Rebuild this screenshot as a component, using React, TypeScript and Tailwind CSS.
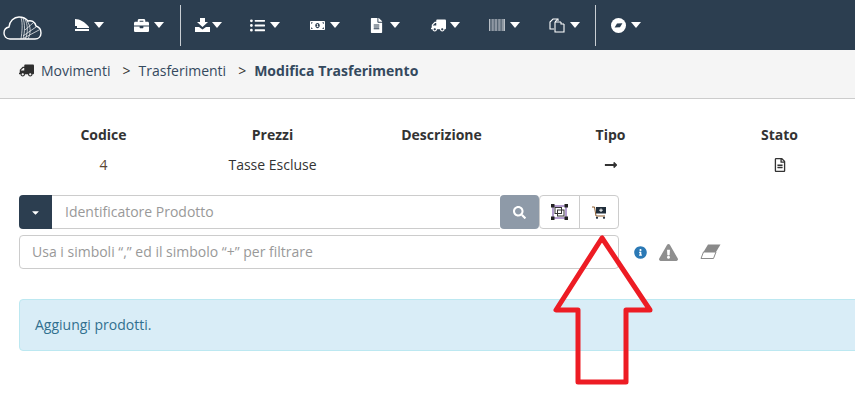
import type { ReactNode } from "react"
import {
  FaBriefcase,
  FaCaretDown,
  FaFileAlt,
  FaInfoCircle,
  FaListUl,
  FaLongArrowAltRight,
  FaMoneyBillAlt,
  FaRegFileAlt,
  FaSearch,
  FaExclamationTriangle,
  FaTruck,
} from "react-icons/fa"

const CloudLogo = () => (
  <svg width="39" height="24" viewBox="0 0 39 24" fill="none" stroke="#fff" strokeWidth="1.4">
    <path d="M7 23 C3 23 1 20 1 17 C1 13.5 3.5 11.5 6 11 C6.5 5 11 1 16 1 C20 1 23 2.5 25 5 C28 4 32 5.5 33 10 C36 11 38 14 38 17 C38 20.5 35.5 23 32 23 Z" />
    <path d="M18 1.5 C20 8 19 16 18 23 M20 2 C22 8 22 16 20 23 M22 3 C25 9 25 16 22.5 23 M24 5 C28 10 28 17 25 23 M20 20 L33 11 M21 22 L36 14 M22 14 L30 7" strokeWidth="0.7" />
  </svg>
)

const PieIcon = () => (
  <svg width="14" height="12" viewBox="0 0 14 12" fill="#fff">
    <path d="M0 0 C5 0 10 3 14 8 L14 9 L2 9 L2 7 L0 7 Z M0 10 L14 10 L14 12 L0 12 Z" />
  </svg>
)

const BoxDownIcon = () => (
  <svg width="15" height="14" viewBox="0 0 15 14" fill="#fff">
    <path d="M5 0 H10 V4 H13 L7.5 9 L2 4 H5 Z M0 9 H4 L7.5 11.5 L11 9 H15 V14 H0 Z" />
  </svg>
)

const BarcodeIcon = () => (
  <svg width="16" height="12" viewBox="0 0 16 12" fill="#b9bfc6">
    <path d="M0 0 H1 V12 H0 Z M1.6 0 H2.4 V12 H1.6 Z M3 0 H3.7 V12 H3 Z M4.4 0 H5.4 V12 H4.4 Z M6 0 H6.7 V12 H6 Z M7.3 0 H8 V12 H7.3 Z M8.7 0 H9.6 V12 H8.7 Z M10.2 0 H10.9 V12 H10.2 Z M11.5 0 H12.4 V12 H11.5 Z M13 0 H13.7 V12 H13 Z M14.3 0 H16 V12 H14.3 Z" />
  </svg>
)

const CopiesIcon = () => (
  <svg width="16" height="15" viewBox="0 0 16 15" fill="none" stroke="#fff" strokeWidth="1.1">
    <path d="M5 11 H1 V4 L4 1 H9 V3" />
    <path d="M6 4 H12 M6 4 L8.5 1 M6 4 V14 H15 V6" />
    <path d="M12 4 V6 H15" />
  </svg>
)

const CompassIcon = () => (
  <svg width="15" height="15" viewBox="0 0 15 15">
    <circle cx="7.5" cy="7.5" r="7.5" fill="#fff" />
    <path d="M3.6 9.6 L6 5.6 L11.4 5.2 L9 9.2 Z" fill="#2c3e50" />
  </svg>
)

const SelectIcon = () => (
  <svg width="17" height="16" viewBox="0 0 17 16" fill="none">
    <rect x="2" y="2" width="13" height="12" stroke="#6b3fa0" strokeWidth="1" />
    <rect x="4" y="3.5" width="6.5" height="6" stroke="#333" strokeWidth="1" />
    <rect x="6.5" y="6" width="6.5" height="6" stroke="#333" strokeWidth="1" />
    <rect x="0.5" y="0.5" width="2.5" height="2.5" fill="#222" stroke="#222" />
    <rect x="14" y="0.5" width="2.5" height="2.5" fill="#222" stroke="#222" />
    <rect x="0.5" y="13" width="2.5" height="2.5" fill="#222" stroke="#222" />
    <rect x="14" y="13" width="2.5" height="2.5" fill="#222" stroke="#222" />
  </svg>
)

const CartIcon = () => (
  <svg width="14" height="13" viewBox="0 0 14 13" fill="none">
    <path d="M0 1 H2.5 L4 10 H13" stroke="#8a5a2b" strokeWidth="1" />
    <rect x="4" y="1" width="10" height="6.5" fill="#1f2d3a" />
    <path d="M9 2.5 V6 M7.2 4.2 H10.8" stroke="#fff" strokeWidth="1" />
    <circle cx="5" cy="11.8" r="1.1" fill="#1f2d3a" />
    <circle cx="12" cy="11.8" r="1.1" fill="#1f2d3a" />
  </svg>
)

const EraserIcon = () => (
  <svg width="21" height="15" viewBox="0 0 21 15" fill="none">
    <path d="M8 0.5 H20.5 L16 8 H3.5 Z" fill="#8a8a8a" />
    <path d="M3.5 8 H16 L13.5 14.5 H1 Z" fill="#fff" stroke="#8a8a8a" strokeWidth="1" />
  </svg>
)

const NavCaret = () => (
  <svg width="10" height="6" viewBox="0 0 10 6" fill="#fff">
    <path d="M0 0 H10 L5 6 Z" />
  </svg>
)

function NavItem({ icon, width }: { icon: ReactNode; width: string }) {
  return (
    <div className={`flex items-center ${width}`}>
      <span className="flex flex-1 items-center text-[15px] text-white">{icon}</span>
      <NavCaret />
    </div>
  )
}

const Divider = () => <div className="h-[41px] w-px bg-[#c9ced3]" />

const columns = ["Codice", "Prezzi", "Descrizione", "Tipo", "Stato"]

export default function App() {
  return (
    <div className="relative h-[417px] w-[855px] overflow-hidden bg-white font-['Open_Sans',sans-serif] text-[14px] text-[#333]">
      <nav className="flex h-[50px] items-center bg-[#2c3e50]">
        <div className="ml-[3px] mt-[6px] w-[72px]">
          <CloudLogo />
        </div>
        <NavItem width="w-[29px] mr-[30px]" icon={<PieIcon />} />
        <NavItem width="w-[30px] mr-[16px]" icon={<FaBriefcase />} />
        <Divider />
        <div className="flex items-center pl-[14px]">
          <NavItem width="w-[27px] mr-[28px]" icon={<BoxDownIcon />} />
          <NavItem width="w-[30px] mr-[30px]" icon={<FaListUl />} />
          <NavItem width="w-[30px] mr-[29px]" icon={<FaMoneyBillAlt />} />
          <NavItem width="w-[31px] mr-[31px]" icon={<FaFileAlt />} />
          <NavItem width="w-[29px] mr-[29px]" icon={<FaTruck className="-scale-x-100" />} />
          <NavItem width="w-[31px] mr-[29px]" icon={<BarcodeIcon />} />
          <NavItem width="w-[31px] mr-[15px]" icon={<CopiesIcon />} />
        </div>
        <Divider />
        <div className="pl-[15px]">
          <NavItem width="w-[30px]" icon={<CompassIcon />} />
        </div>
      </nav>

      <div className="flex h-[49px] items-center border-b border-[#ccc] bg-[#f5f5f5] pb-[7px] pl-[19px]">
        <span className="flex items-center gap-[7px] text-[#34495e]">
          <FaTruck className="-scale-x-100 text-[15px] text-[#2f2f2f]" />
          Movimenti
        </span>
        <span className="ml-[12px] mr-[8px]">&gt;</span>
        <span className="text-[#34495e]">Trasferimenti</span>
        <span className="ml-[12px] mr-[8px]">&gt;</span>
        <span className="font-bold text-[#34495e]">Modifica Trasferimento</span>
      </div>

      <div className="w-[864px] pl-[19px] pt-[22px]">
        <div className="grid grid-cols-5 text-center">
          {columns.map((c) => (
            <div key={c} className="mb-[3px] h-[28px] font-bold leading-[28px]">
              {c}
            </div>
          ))}
          <div className="leading-[26px] text-[#5a4632]">4</div>
          <div className="leading-[26px]">Tasse Escluse</div>
          <div />
          <div className="flex items-center justify-center">
            <FaLongArrowAltRight className="text-[14px]" />
          </div>
          <div className="flex items-center justify-center">
            <FaRegFileAlt className="text-[14px]" />
          </div>
        </div>
      </div>

      <div className="ml-[19px] mt-[17px] flex h-[34px] w-[600px]">
        <div className="flex w-[33px] items-center justify-center rounded-l-[4px] bg-[#2c3e50]">
          <FaCaretDown className="text-[11px] text-white" />
        </div>
        <div className="flex flex-1 items-center border-y border-[#ccc] pb-[2px] pl-[13px] text-[#999]">
          Identificatore Prodotto
        </div>
        <div className="flex w-[39px] items-center justify-center rounded-[4px] bg-[#8e9aa8]">
          <FaSearch className="text-[13px] text-white" />
        </div>
        <div className="flex w-[41px] items-center justify-center rounded-l-[4px] border border-[#ccc]">
          <SelectIcon />
        </div>
        <div className="-ml-px flex w-[40px] items-center justify-center rounded-r-[4px] border border-[#ccc]">
          <CartIcon />
        </div>
      </div>

      <div className="ml-[19px] mt-[6px] flex items-center">
        <div className="flex h-[34px] w-[600px] items-center rounded-[4px] border border-[#ccc] pb-[2px] pl-[12px] text-[#999]">
          Usa i simboli “,” ed il simbolo “+” per filtrare
        </div>
        <FaInfoCircle className="ml-[15px] text-[13px] text-[#2b79b5]" />
        <FaExclamationTriangle className="ml-[12px] text-[19px] text-[#8f8f8f]" />
        <span className="ml-[22px] -mt-[2px]">
          <EraserIcon />
        </span>
      </div>

      <div className="ml-[19px] mt-[30px] flex h-[52px] w-[860px] items-center rounded-[4px] border border-[#bce8f1] bg-[#d9edf7] pb-[2px] pl-[15px] text-[#31708f]">
        Aggiungi prodotti.
      </div>

      <svg className="absolute left-[550px] top-[232px]" width="106" height="156" viewBox="0 0 106 156" fill="none">
        <path d="M52 6 L6 78 H28 V150 H76 V78 H100 Z" stroke="#ed1c24" strokeWidth="5" strokeLinejoin="round" />
      </svg>
    </div>
  )
}
